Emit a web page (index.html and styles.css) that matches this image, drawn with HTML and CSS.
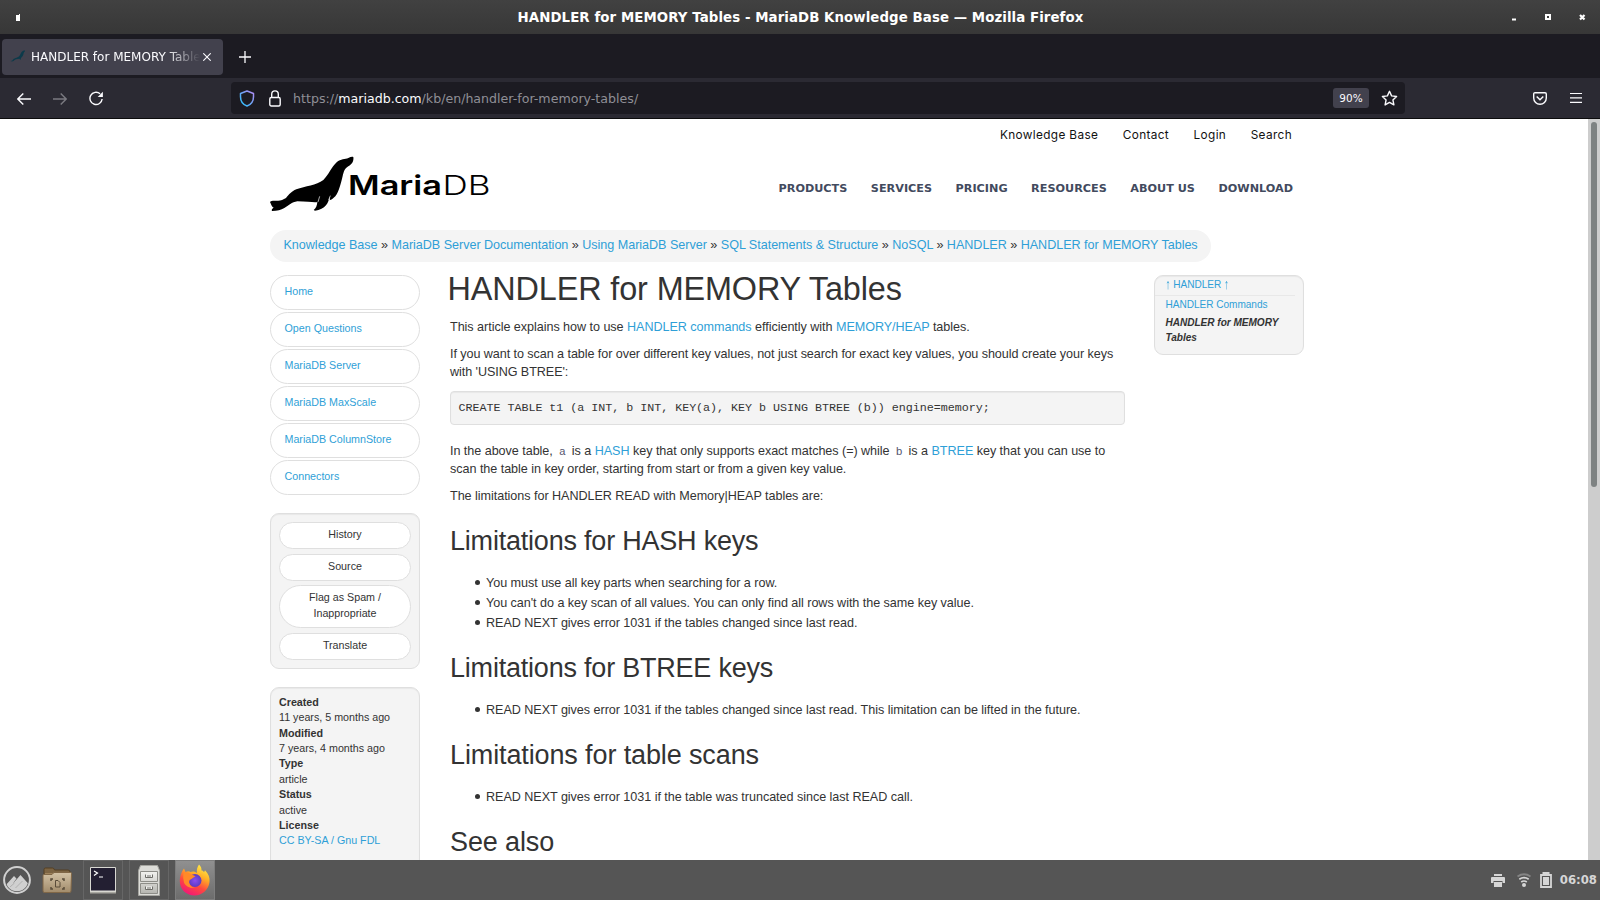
FILE: index.html
```html
<!DOCTYPE html>
<html lang="en">
<head>
<meta charset="utf-8">
<title>HANDLER for MEMORY Tables - MariaDB Knowledge Base</title>
<link rel="stylesheet" href="styles.css">
</head>
<body>
<div class="screen">
  <header class="titlebar">
    <svg class="app-dot" width="4" height="7" viewBox="0 0 4 7"><path d="M0 1h3V0h1v7H0z" fill="#fff"/></svg>
    <span class="window-title">HANDLER for MEMORY Tables - MariaDB Knowledge Base — Mozilla Firefox</span>
    <svg class="window-buttons" width="74" height="7" viewBox="0 0 74 7">
      <path d="M0 4.500h4v2H0z" fill="#fff"/>
      <path d="M34 1h4v4h-4z" fill="none" stroke="#fff" stroke-width="2"/>
      <path d="M68 1l4.500 4.500M72.500 1L68 5.500" stroke="#fff" stroke-width="2.200"/>
    </svg>
  </header>

  <div class="tabbar">
    <div class="tab">
      <svg class="favicon" width="16" height="16" viewBox="0 0 16 16"><path d="M.5 12c2 0 2-1 3-2s5-1 6.500-4 2-4.500 5-4.500c.3 1-1 1.200-1.300 2.500-.4 2-.9 3.500-2.700 5l-.5 2-1-1.200C6.500 10 5 10.500 3.500 12c-1 .6-2 .5-3 0z" fill="#0c3a4a"/></svg>
      <span class="tab-label">HANDLER for MEMORY Tables</span>
      <svg class="tab-close" width="8" height="8" viewBox="0 0 8 8"><path d="M.3.300l7.400 7.400M7.700.300L.3 7.700" stroke="#fbfbfe" stroke-width="1.100"/></svg>
    </div>
    <svg class="new-tab" width="12" height="12" viewBox="0 0 12 12"><path d="M6 0v12M0 6h12" stroke="#fbfbfe" stroke-width="1.300"/></svg>
  </div>

  <div class="toolbar">
    <div class="nav-buttons">
      <svg width="14" height="12" viewBox="0 0 14 12"><path d="M6.300.500L.8 6l5.500 5.500M1 6h13" fill="none" stroke="#fbfbfe" stroke-width="1.400"/></svg>
      <svg width="14" height="12" viewBox="0 0 14 12"><path d="M7.700.500L13.200 6l-5.500 5.500M13 6H0" fill="none" stroke="#7b7a81" stroke-width="1.400"/></svg>
      <svg width="15" height="15" viewBox="0 0 16 16"><path d="M11.800 3A6.500 6.500 0 1 0 14 8.500" fill="none" stroke="#fbfbfe" stroke-width="1.500"/><path d="M14.800.800v5.500H9.300z" fill="#fbfbfe"/></svg>
    </div>
    <div class="urlbar">
      <svg class="shield" width="16" height="17" viewBox="0 0 16 17"><defs><linearGradient id="sg" x1="0" y1="1" x2="1" y2="0"><stop offset="0" stop-color="#20c5fb"/><stop offset=".5" stop-color="#6ea3f5"/><stop offset="1" stop-color="#b48bf5"/></linearGradient></defs><path d="M8 1L1.500 3.500v3.200C1.500 11 4 14.500 8 16c4-1.500 6.500-5 6.500-9.300V3.500z" fill="none" stroke="url(#sg)" stroke-width="1.500" stroke-linejoin="round"/></svg>
      <svg class="lock" width="12" height="17" viewBox="0 0 12 17"><rect x=".8" y="7.500" width="10.400" height="8.500" rx="1.500" fill="none" stroke="#fbfbfe" stroke-width="1.400"/><path d="M2.700 7.500V4.200a3.300 3.300 0 0 1 6.600 0v3.300" fill="none" stroke="#fbfbfe" stroke-width="1.400"/></svg>
      <span class="url">https://<b>mariadb.com</b>/kb/en/handler-for-memory-tables/</span>
      <span class="zoom-level">90%</span>
      <svg class="star" width="17" height="17" viewBox="0 0 17 17"><path d="M8.500 1.300l2.100 4.600 5 .6-3.700 3.400 1 5-4.400-2.500-4.400 2.500 1-5L1.400 6.500l5-.6z" fill="none" stroke="#fbfbfe" stroke-width="1.400" stroke-linejoin="round"/></svg>
    </div>
    <svg class="pocket" width="14" height="13" viewBox="0 0 14 13"><path d="M2 .7h10a1.300 1.300 0 0 1 1.300 1.300v4a6.300 6.300 0 0 1-12.600 0V2A1.300 1.300 0 0 1 2 .7z" fill="none" stroke="#fbfbfe" stroke-width="1.400"/><path d="M3.700 4.500L7 7.700l3.300-3.200" fill="none" stroke="#fbfbfe" stroke-width="1.500"/></svg>
    <svg class="menu" width="12" height="10" viewBox="0 0 12 10"><path d="M0 .5h12M0 4.900h12M0 9.300h12" stroke="#fbfbfe" stroke-width="1.200"/></svg>
  </div>

  <div class="viewport">
    <div class="page">
      <nav class="topnav"><a>Knowledge Base</a><a>Contact</a><a>Login</a><a>Search</a></nav>
      <div class="brand-row">
        <svg class="logo" width="230" height="64" viewBox="0 0 230 64">
          <g transform="scale(.33333)"><path d="M262 15C264 27 258 37 247 43C235 50 233 61 230 72C225 93 219 119 208 133L198 142L191 145C192 140 191 136 191 134C188 145 187 151 180 160C173 168 162 175 147 176L143 174C150 169 153 160 154 150C147 152 127 149 94 148C77 151 68 160 55 168C45 174 34 177 18 177C16 173 18 170 23 167C17 164 15 156 12 150C18 144 26 147 33 146C43 147 51 143 60 138C70 127 76 118 91 112C118 102 151 100 172 84C189 68 196 45 212 31C225 19 237 23 247 18C253 15 258 14 262 15Z" fill="#000"/><path d="M161 133l-5 17M193 131l-5 13" stroke="#fff" stroke-width="2"/></g>
          <text class="logo-strong" x="82" y="43" textLength="94" lengthAdjust="spacingAndGlyphs">Maria</text>
          <text class="logo-light" x="176.500" y="43" textLength="48" lengthAdjust="spacingAndGlyphs">DB</text>
        </svg>
        <nav class="mainnav"><a>PRODUCTS</a><a>SERVICES</a><a>PRICING</a><a>RESOURCES</a><a>ABOUT US</a><a>DOWNLOAD</a></nav>
      </div>

      <div class="breadcrumb"><a>Knowledge Base</a> » <a>MariaDB Server Documentation</a> » <a>Using MariaDB Server</a> » <a>SQL Statements &amp; Structure</a> » <a>NoSQL</a> » <a>HANDLER</a> » <a>HANDLER for MEMORY Tables</a></div>

      <div class="columns">
        <aside class="side">
          <ul class="side-links">
            <li><a>Home</a></li><li><a>Open Questions</a></li><li><a>MariaDB Server</a></li>
            <li><a>MariaDB MaxScale</a></li><li><a>MariaDB ColumnStore</a></li><li><a>Connectors</a></li>
          </ul>
          <div class="well actions">
            <a>History</a><a>Source</a><a class="tall">Flag as Spam /<br>Inappropriate</a><a>Translate</a>
          </div>
          <dl class="well meta">
            <dt>Created</dt><dd>11 years, 5 months ago</dd>
            <dt>Modified</dt><dd>7 years, 4 months ago</dd>
            <dt>Type</dt><dd>article</dd>
            <dt>Status</dt><dd>active</dd>
            <dt>License</dt><dd><a>CC BY-SA / Gnu FDL</a></dd>
          </dl>
        </aside>

        <main class="article">
          <h1>HANDLER for MEMORY Tables</h1>
          <p>This article explains how to use <a>HANDLER commands</a> efficiently with <a>MEMORY/HEAP</a> tables.</p>
          <p class="dense">If you want to scan a table for over different key values, not just search for exact key values, you should create your keys<br>with 'USING BTREE':</p>
          <pre>CREATE TABLE t1 (a INT, b INT, KEY(a), KEY b USING BTREE (b)) engine=memory;</pre>
          <p>In the above table, <code>a</code> is a <a>HASH</a> key that only supports exact matches (=) while <code>b</code> is a <a>BTREE</a> key that you can use to<br>scan the table in key order, starting from start or from a given key value.</p>
          <p>The limitations for HANDLER READ with Memory|HEAP tables are:</p>
          <h2 class="first">Limitations for HASH keys</h2>
          <ul>
            <li>You must use all key parts when searching for a row.</li>
            <li>You can't do a key scan of all values. You can only find all rows with the same key value.</li>
            <li>READ NEXT gives error 1031 if the tables changed since last read.</li>
          </ul>
          <h2>Limitations for BTREE keys</h2>
          <ul><li>READ NEXT gives error 1031 if the tables changed since last read. This limitation can be lifted in the future.</li></ul>
          <h2 class="loose">Limitations for table scans</h2>
          <ul><li>READ NEXT gives error 1031 if the table was truncated since last READ call.</li></ul>
          <h2 class="loose">See also</h2>
        </main>

        <aside class="well related">
          <a class="parent"><span class="arrow">↑</span> HANDLER <span class="arrow">↑</span></a>
          <a class="sibling">HANDLER Commands</a>
          <strong>HANDLER for MEMORY<br>Tables</strong>
        </aside>
      </div>
    </div>
    <div class="scrollbar"><div class="thumb"></div></div>
  </div>

  <footer class="taskbar">
    <div class="launcher start">
      <svg width="28" height="28" viewBox="0 0 28 28"><defs><clipPath id="mc"><circle cx="14" cy="14" r="11.300"/></clipPath></defs><circle cx="14" cy="14" r="12.900" fill="none" stroke="#d0d0d0" stroke-width="2"/><path clip-path="url(#mc)" d="M2 20L11 10l2.500 2.500L9.500 18l8-9 9 10v8H4z" fill="#d0d0d0"/><path d="M7 21l4.500-4M12.500 22l7-7" stroke="#999" stroke-width=".6"/></svg>
    </div>
    <div class="launcher">
      <svg width="30" height="27" viewBox="0 0 30 27"><defs><linearGradient id="fg" x1="0" y1="0" x2="0" y2="1"><stop offset="0" stop-color="#d3c2a5"/><stop offset="1" stop-color="#a18b6b"/></linearGradient></defs><path d="M2 9V2.500Q2 1 3.500 1h7q1.500 0 2 2H26q2 0 2 2v4z" fill="#7c6443" stroke="#543f22"/><path d="M3 6h24v3H3z" fill="#9d825b"/><path d="M1 8.500q0-1 1-1h8l2-2h16.500q1 0 1 1L29 24q0 1.500-1.500 1.500h-25Q1 25.500 1 24z" fill="url(#fg)" stroke="#806747"/><path d="M9 14v-2h2M20 12h2v2M22 20v2h-2M11 22H9v-2" fill="none" stroke="#5a4c3a" stroke-width="1.500"/><path d="M13.500 13.500h2.500l2 2v4.500h-4.500z" fill="none" stroke="#5a4c3a"/></svg>
    </div>
    <div class="launcher boxed">
      <svg width="28" height="28" viewBox="0 0 28 28"><rect x="1" y="1" width="26" height="26" rx="1" fill="#d8d8d2"/><rect x="2" y="2" width="24" height="22.500" fill="#231f32"/><path d="M1 26h26v1.500H1z" fill="#aaa9a2"/><path d="M5 5l3.500 2L5 9.500M10 11h4" fill="none" stroke="#fff" stroke-width="1.200"/></svg>
    </div>
    <div class="launcher boxed">
      <svg width="22" height="31" viewBox="0 0 22 31"><defs><linearGradient id="cg" x1="0" y1="0" x2="0" y2="1"><stop offset="0" stop-color="#f2f2ef"/><stop offset="1" stop-color="#b5b5b0"/></linearGradient></defs><path d="M2.500.5h17l2 5v25H.5v-25z" fill="#dcdcd8" stroke="#a5a5a0"/><path d="M2.500 6.500h17v10h-17zM2.500 18.500h17v10h-17z" fill="url(#cg)" stroke="#8d8d88"/><path d="M7.500 9.500v3h7v-3M7.500 21.500v3h7v-3" fill="#f2f2ef" stroke="#6d6d69"/><path d="M9 11h4M9 23h4" stroke="#6d6d69"/></svg>
    </div>
    <div class="launcher boxed active">
      <svg width="31" height="32" viewBox="0 0 31 32"><defs><linearGradient id="ff" x1=".8" y1="0" x2=".3" y2="1"><stop offset="0" stop-color="#fff34f"/><stop offset=".35" stop-color="#ffae25"/><stop offset=".65" stop-color="#ff4a3d"/><stop offset="1" stop-color="#f0157a"/></linearGradient><radialGradient id="fp"><stop offset="0" stop-color="#8a4df0"/><stop offset="1" stop-color="#5a3cc0"/></radialGradient></defs><path d="M20 .5c2 2 2.500 3.500 2.500 6 1.200 0 2 .6 2.500 1.800l1-2C29.500 10 31 13.500 30.500 18 29.500 26 23 31.500 15.500 31.500S1 26 .8 17.500C.7 12 3 7 5 4.500L6.500 8q3-1.500 5 0C13.500 7 16.500 7.500 18 9c-.5-3 .2-6 2-8.500z" fill="url(#ff)"/><circle cx="16" cy="16.500" r="6.500" fill="url(#fp)"/><path d="M4.500 8.500Q9 7.500 11.500 10L16.500 12.200q-2 1-4 2.800-2.500.5-2.400 3 .5 5 6 6-8 .5-11-5-1.500-4-.6-10.500z" fill="#ff8a28"/></svg>
    </div>
    <div class="tray">
      <svg width="14" height="13" viewBox="0 0 14 13"><path d="M3 0h8v2H3zM1 3h12q1 0 1 1v5h-2.500V7h-9v2H0V4q0-1 1-1zM3 8h8v5H3z" fill="#d6d6d6"/></svg>
      <svg class="wifi" width="14" height="14" viewBox="0 0 14 14"><path d="M.5 3.500Q7-1 13.500 3.500" fill="none" stroke="#858585" stroke-width="1.900"/><path d="M2.300 6.300q4.700-3.200 9.400 0M4.200 9q2.800-2 5.600 0" fill="none" stroke="#d6d6d6" stroke-width="1.700"/><circle cx="7" cy="12" r="2" fill="#d6d6d6"/></svg>
      <svg class="battery" width="12" height="16" viewBox="0 0 12 16"><path d="M3.500 2V1h5v1" fill="none" stroke="#d6d6d6" stroke-width="2"/><path d="M1 3h10v12H1z" fill="none" stroke="#d6d6d6" stroke-width="1.800"/><path d="M3 5h6v8H3z" fill="#d6d6d6"/></svg>
      <span class="clock">06:08</span>
    </div>
  </footer>
</div>
</body>
</html>
```
FILE: styles.css
```css
* { box-sizing: border-box; }
body { margin: 0; font-family: "Liberation Sans", Arial, sans-serif; color: #333; }
svg { display: block; flex: none; }
ul, dl, dd { margin: 0; padding: 0; }
.screen { width: 1600px; height: 900px; overflow: hidden; display: flex; flex-direction: column; background: #fff; }

/* Window chrome */
.titlebar { height: 34px; flex: none; display: flex; align-items: center; padding: 0 14px 0 16px; background: linear-gradient(#414141, #373737); font-family: "DejaVu Sans", sans-serif; }
.window-title { flex: 1; text-align: center; color: #fff; font-size: 13.33px; letter-spacing: .08px; font-weight: bold; padding-left: 69px; white-space: nowrap; }
.tabbar { height: 44px; flex: none; display: flex; align-items: center; padding: 1px 2px 0; background: #1c1b22; font-family: "DejaVu Sans", sans-serif; }
.tab { width: 221px; height: 36px; border-radius: 4px; background: #42414d; display: flex; align-items: center; padding: 0 12px 0 8px; }
.tab-label { flex: 1; min-width: 0; margin-left: 5px; margin-right: 3px; overflow: hidden; white-space: nowrap; font-size: 12px; line-height: 20px; color: #fbfbfe; -webkit-mask-image: linear-gradient(to right, #000 80%, transparent); mask-image: linear-gradient(to right, #000 80%, transparent); }
.new-tab { margin-left: 16px; }
.toolbar { height: 41px; flex: none; display: flex; align-items: center; background: #2b2a33; border-bottom: 1px solid #0c0c0d; padding: 0 18px 0 17px; font-family: "DejaVu Sans", sans-serif; }
.nav-buttons { width: 214px; display: flex; align-items: center; gap: 22px; padding-top: 1px; }
.urlbar { width: 1174px; height: 32px; border-radius: 4px; background: #1c1b22; display: flex; align-items: center; padding: 0 7px 0 8px; }
.lock { margin-left: 14px; }
.url { flex: 1; margin-left: 12px; font-size: 12.62px; line-height: 20px; padding-top: 1px; color: #8f8f96; white-space: nowrap; }
.url b { font-weight: normal; color: #fbfbfe; }
.zoom-level { width: 36px; height: 20px; line-height: 20px; border-radius: 3px; background: #42414d; color: #fbfbfe; font-size: 10.5px; text-align: center; margin-right: 12px; }
.pocket { margin-left: auto; }
.menu { margin-left: 23px; }

/* Web page */
.viewport { height: 741px; flex: none; display: flex; overflow: hidden; }
.page { width: 1034px; height: 741px; margin-left: 270px; }
.scrollbar { width: 12px; height: 741px; margin-left: auto; padding: 3px 3px 0; background: #cdcdcd; }
.thumb { height: 365px; border-radius: 3px; background: #7e8282; }
.page a { color: #2f9fd7; }
.topnav { height: 33px; display: flex; justify-content: flex-end; gap: 24.5px; padding: 5px 12px 0 0; font: 11.8px/22px Inter, sans-serif; letter-spacing: .36px; }
.page .topnav a { color: #111; }
.brand-row { height: 78px; display: flex; justify-content: space-between; align-items: flex-start; margin-left: -4px; }
.logo-strong { font: 600 27px Inter, sans-serif; fill: #000; }
.logo-light { font: 300 27px Inter, sans-serif; fill: #000; }
.mainnav { display: flex; gap: 23.5px; padding: 27px 11px 0 0; font: bold 11.22px/20px "DejaVu Sans", sans-serif; }
.page .mainnav a { color: #424a5e; }
.breadcrumb { width: 941px; height: 32px; border-radius: 16px; background: #f4f4f4; padding: 6px 0 0 13.500px; font-size: 12.6px; letter-spacing: -.033px; line-height: 18px; white-space: nowrap; }
.columns { display: flex; align-items: flex-start; padding-top: 13px; }
.side { width: 150px; font-size: 10.71px; }
.side-links { list-style: none; }
.side-links li { height: 35px; margin-bottom: 2px; border: 1px solid #dfdfdf; border-radius: 18px; padding: 7px 13.5px; line-height: 17px; }
.well { background: #f4f4f4; border: 1px solid #dfdfdf; border-radius: 9px; box-shadow: inset 0 1px 1px rgba(0,0,0,.05); }
.actions { height: 156px; margin-top: 18px; padding: 8px; display: flex; flex-direction: column; gap: 5px; }
.page .actions a { height: 27px; border: 1px solid #dfdfdf; border-radius: 14px; background: #fff; color: #333; text-align: center; line-height: 16px; padding-top: 3px; }
.page .actions .tall { height: 43px; border-radius: 22px; margin-top: -1px; }
.meta { margin-top: 18px; height: 190px; padding: 7px 8px; line-height: 15.36px; }
.meta dt { font-weight: bold; }
.article { width: 675px; margin: -4px 0 0 30px; font-size: 12.6px; letter-spacing: -.045px; line-height: 18px; white-space: nowrap; }
.article h1 { margin: 0 0 11px -2.5px; font-size: 32.4px; letter-spacing: -.12px; line-height: 36px; font-weight: normal; }
.article p { margin: 0 0 9px; }
.article .dense { letter-spacing: -.07px; }
.article pre { margin: 10px 0 17px; height: 34px; padding: 7px 7.5px; border: 1px solid #dfdfdf; border-radius: 4px; background: #f4f4f4; box-shadow: inset 0 1px 1px rgba(0,0,0,.05); font: 11.7px/18px "Liberation Mono", monospace; letter-spacing: -.025px; }
.article code { padding: 0 2.7px; font: 11.34px/1 "Liberation Mono", monospace; color: #555770; }
.article h2 { margin: 17px 0 14px; font-size: 27px; letter-spacing: -.21px; line-height: 36px; font-weight: normal; }
.article h2.first { margin-top: 18px; }
.article h2.loose { letter-spacing: -.12px; }
.article ul { padding-left: 36px; list-style: none; }
.article li { line-height: 20px; }
.article li::before { content: ""; display: inline-block; width: 5px; height: 5px; margin: 0 6.5px 0 -11.5px; border-radius: 50%; background: #333; vertical-align: 2px; }
.related { width: 150px; height: 80px; margin-left: 29px; font-size: 10.08px; letter-spacing: -.03px; display: flex; flex-direction: column; }
.related .parent { height: 20px; line-height: 18px; width: 140px; padding-left: 10.5px; border-bottom: 1px solid #e8e8e8; }
.arrow { display: inline-block; transform: scaleY(1.45); }
.related .sibling { padding-left: 10.5px; line-height: 18px; height: 19px; }
.related strong { padding-left: 10.5px; line-height: 15px; font-style: italic; }

/* Desktop panel */
.taskbar { height: 40px; flex: none; display: flex; background: #555; font-family: "DejaVu Sans", sans-serif; }
.launcher { width: 40px; height: 40px; display: flex; align-items: center; justify-content: center; }
.launcher.start { width: 34px; margin-right: 3px; }
.boxed { margin-left: 6px; border: 1px solid #666; }
.boxed.active { background: linear-gradient(#909090, #6c6c6c); border-color: #7d7d7d; padding-right: 1px; }
.tray { margin-left: auto; display: flex; align-items: center; }
.wifi { margin-left: 12px; }
.battery { margin-left: 9px; }
.clock { margin: 0 3px 0 8px; font-size: 11.7px; font-weight: bold; color: #d6d6d6; }
```
